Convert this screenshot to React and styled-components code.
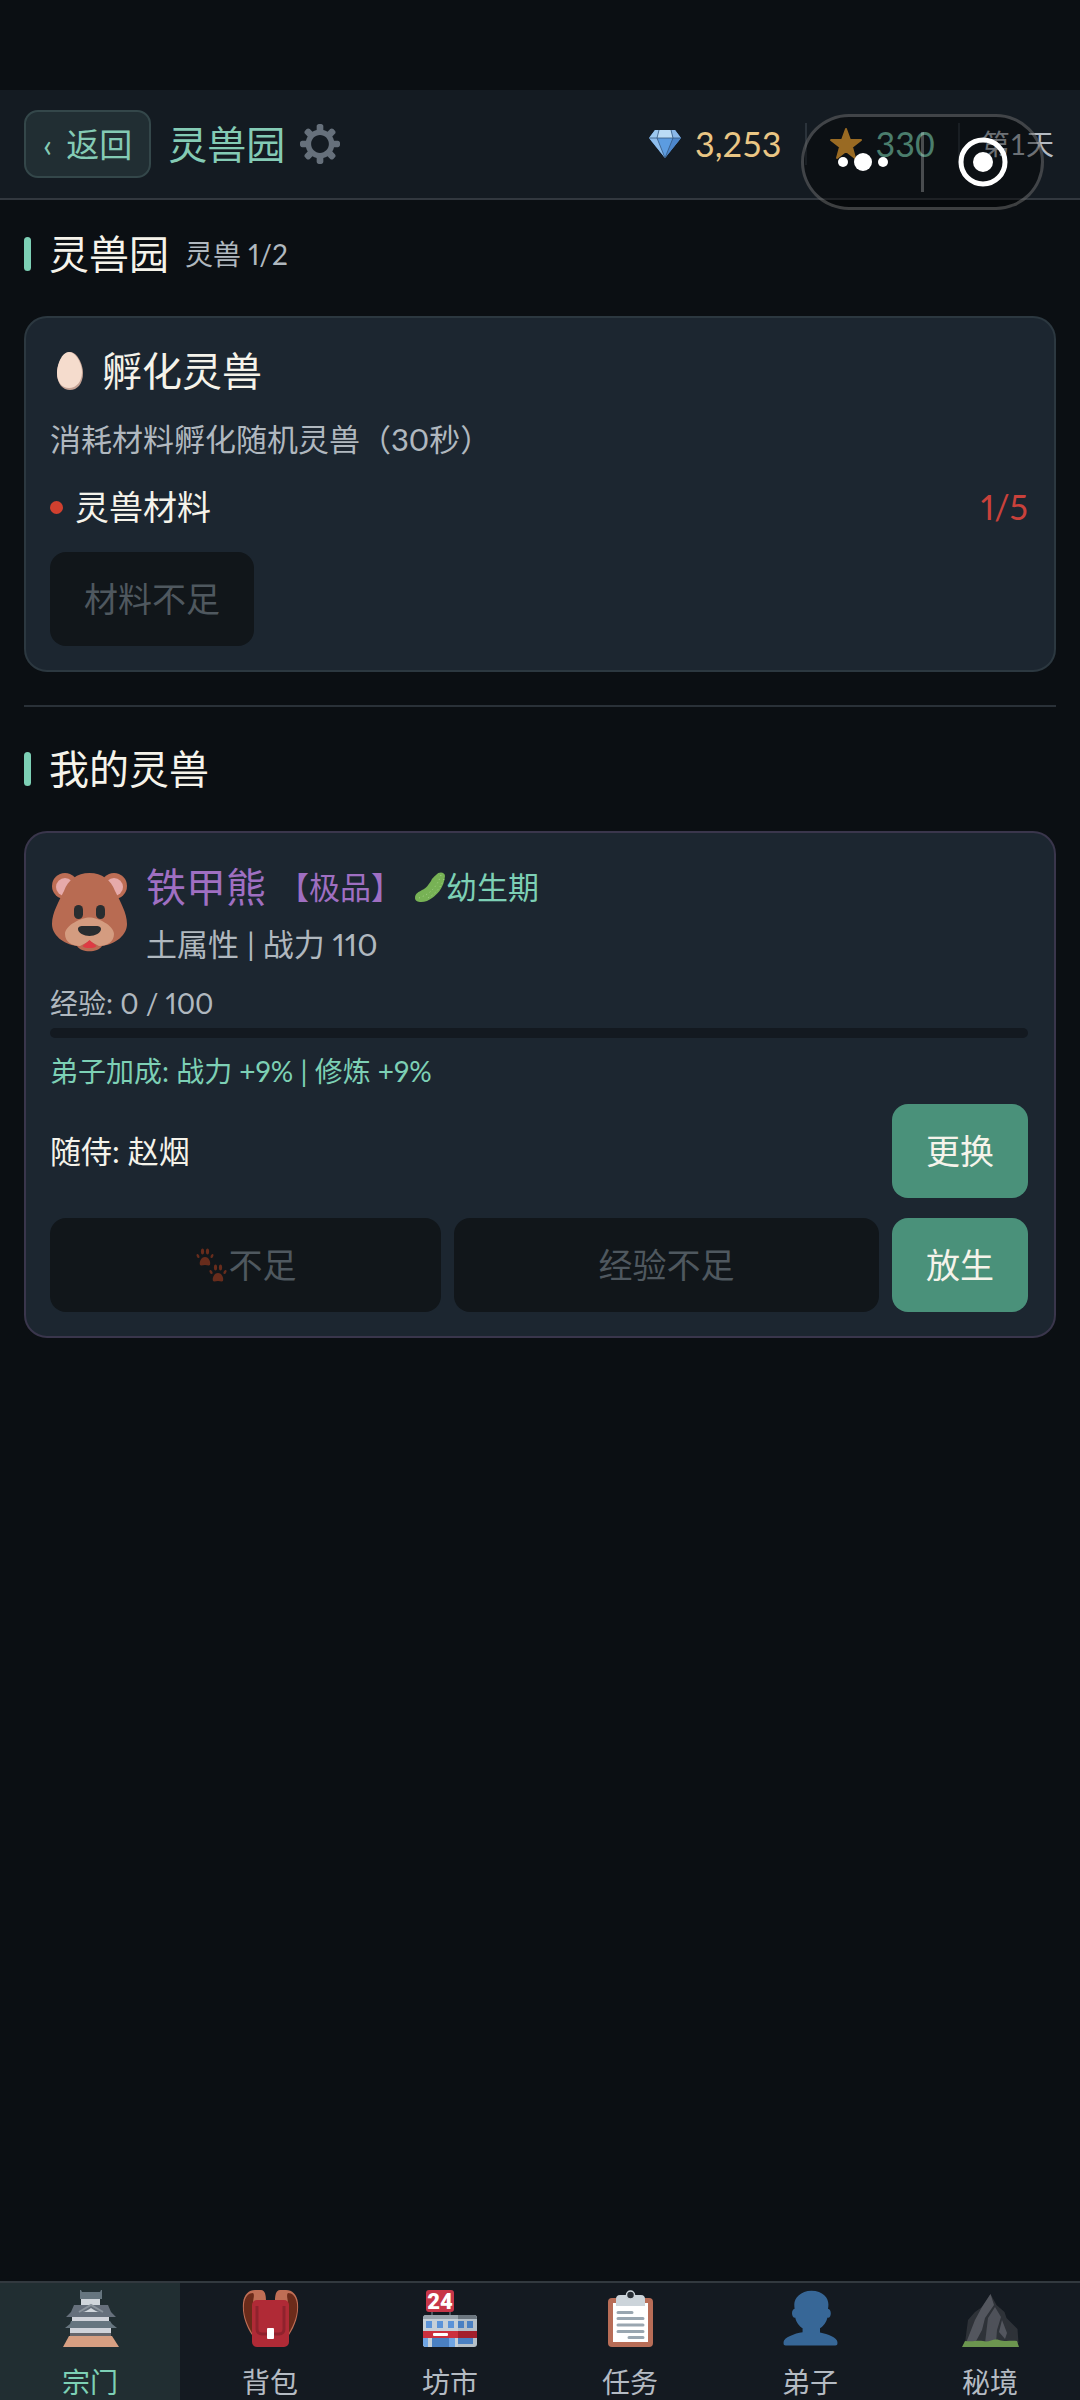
import React from 'react'
import styled, { createGlobalStyle } from 'styled-components'

const GlobalStyle = createGlobalStyle`
  * {
    box-sizing: border-box;
  }
  body {
    margin: 0;
    background-color: #0b0f13;
    color: #f5f3ea;
    font-family: Lato, 'Noto Sans CJK SC', sans-serif;
    font-variant-numeric: proportional-nums;
  }
  button {
    font-family: inherit;
    margin: 0;
    border: 0;
    cursor: pointer;
  }
  h1, h2, h3, p {
    margin: 0;
    font-weight: 400;
  }
  svg {
    display: block;
    flex-shrink: 0;
  }
`

const Page = styled.div`
  display: flex;
  flex-direction: column;
  min-height: 100vh;
  padding-top: 90px;
`

const Flex = styled.div`
  display: flex;
  align-items: ${props => props.align || 'center'};
  justify-content: ${props => props.justify || 'flex-start'};
  gap: ${props => props.gap || '0'};
  margin-top: ${props => props.mt || '0'};
`

/* header */

const Header = styled.header`
  display: flex;
  align-items: center;
  height: 110px;
  padding: 0 26px 0 24px;
  background-color: #141b22;
  border-bottom: 2px solid #32383f;
`

const BackButton = styled.button`
  display: flex;
  align-items: center;
  gap: 14px;
  height: 68px;
  padding: 0 17px;
  border: 2px solid #34474a;
  border-radius: 14px;
  background-color: #212e33;
  color: #84cbb5;
  font-size: 33px;
  line-height: 50px;
`

const PageTitle = styled.h1`
  margin-left: 17px;
  color: #84cbb5;
  font-size: 39px;
  line-height: 58px;
`

const IconButton = styled.button`
  margin-left: 15px;
  padding: 0;
  background: none;
`

const Stats = styled.div`
  display: flex;
  align-items: center;
  margin-left: auto;
  font-variant-numeric: tabular-nums;
`

const Stat = styled.div`
  display: flex;
  align-items: center;
  gap: 13px;
  color: ${props => props.color};
  font-size: ${props => (props.small ? '28px' : '34px')};
  line-height: 50px;

  & + & {
    margin-left: 23px;
    padding-left: 24px;
    background: linear-gradient(#2b333b, #2b333b) left center / 2px 42px no-repeat;
  }
`

const Capsule = styled.div`
  position: absolute;
  top: 114px;
  right: 36px;
  display: flex;
  align-items: center;
  width: 243px;
  height: 96px;
  border: 3px solid rgba(255, 255, 255, 0.22);
  border-radius: 48px;
  background-color: rgba(0, 0, 0, 0.4);
`

const CapsuleButton = styled.button`
  display: flex;
  flex: 1;
  align-items: center;
  justify-content: center;
  height: 60px;
  padding: 0;
  background: none;

  & + & {
    border-left: 3px solid rgba(255, 255, 255, 0.25);
  }
`

/* content */

const Main = styled.main`
  flex: 1;
  padding: 25px 24px 0;
`

const SectionHead = styled.div`
  display: flex;
  align-items: center;
  margin-bottom: 33px;

  &::before {
    content: '';
    width: 7px;
    height: 34px;
    margin-right: 18px;
    border-radius: 4px;
    background-color: #7dd0b5;
  }
`

const SectionTitle = styled.h2`
  font-size: 40px;
  line-height: 58px;
`

const Text = styled.span`
  color: ${props => props.color || '#b0b8bf'};
  font-size: ${props => props.size || '31px'};
  line-height: ${props => props.lh || '46px'};
`

const SectionCount = styled(Text)`
  margin-left: 16px;
`

const Divider = styled.hr`
  height: 2px;
  margin: 33px 0;
  border: 0;
  background-color: #2a3138;
`

const Card = styled.section`
  padding: 24px 26px 24px 24px;
  border: 2px solid ${props => props.border || '#2c3840'};
  border-radius: 23px;
  background-color: #1c2630;
`

const CardTitle = styled.h3`
  display: flex;
  align-items: center;
  gap: 12px;
  font-size: 40px;
  line-height: 58px;
`

const Desc = styled.p`
  margin-top: 16px;
  color: #b0b8bf;
  font-size: 31px;
  line-height: 46px;
`

const Dot = styled.i`
  width: 13px;
  height: 13px;
  margin-right: 12px;
  border-radius: 50%;
  background-color: #d0402f;
`

const Material = styled.div`
  display: flex;
  align-items: center;
  margin: 20px 0;
  font-size: 34px;
  line-height: 50px;
`

const Amount = styled.span`
  margin-left: auto;
  color: #c9413b;
`

const Button = styled.button`
  display: flex;
  flex-grow: ${props => (props.$grow ? 1 : 0)};
  align-items: center;
  justify-content: center;
  height: 94px;
  padding: 0 34px;
  border-radius: 16px;
  background-color: #4a917a;
  color: #f5f3ea;
  font-size: 34px;
  line-height: 50px;

  &:disabled {
    background-color: #11161a;
    color: #4f585f;
    cursor: default;
  }
`

const PetName = styled.h3`
  color: #9f6fc2;
  font-size: 40px;
  line-height: 60px;
`

const Stage = styled.span`
  display: flex;
  align-items: center;
  color: #7dd0b5;
  font-size: 31px;
  line-height: 46px;
`

const ExpLabel = styled.label`
  display: block;
  margin-top: 15px;
  color: #b0b8bf;
  font-size: 28px;
  line-height: 42px;
`

const ExpBar = styled.progress`
  display: block;
  width: 100%;
  height: 10px;
  margin: 4px 0 12px;
  border: 0;
  border-radius: 5px;
  appearance: none;
  overflow: hidden;

  &::-webkit-progress-bar {
    background-color: #131920;
  }
  &::-webkit-progress-value {
    background-color: #7dd0b5;
  }
`

const Bonus = styled.p`
  color: #7dd0b5;
  font-size: 28px;
  line-height: 42px;
`

/* bottom tabs */

const Nav = styled.nav`
  display: grid;
  grid-template-columns: repeat(6, 1fr);
  border-top: 2px solid #32393f;
  background-color: #141a21;
`

const NavLink = styled.a`
  display: flex;
  flex-direction: column;
  align-items: center;
  gap: 18px;
  padding-top: 7px;
  background-color: ${props => (props.$active ? '#212e32' : 'transparent')};
  color: ${props => (props.$active ? '#7dd0b5' : '#b4bbc3')};
  font-size: 28px;
  line-height: 35px;
  text-decoration: none;
`

/* icons */

const Gear = () => (
  <svg width="40" height="40" viewBox="0 0 36 36" fill="#66707b">
    <path d="M34 15h-3.362c-.324-1.369-.864-2.651-1.582-3.814l2.379-2.379c.781-.781.781-2.048 0-2.829l-1.414-1.414c-.781-.781-2.047-.781-2.828 0l-2.379 2.379C23.65 6.225 22.369 5.686 21 5.362V2c0-1.104-.896-2-2-2h-2c-1.104 0-2 .896-2 2v3.362c-1.369.324-2.651.864-3.814 1.582L8.808 4.565c-.781-.781-2.048-.781-2.828 0L4.565 5.979c-.781.781-.781 2.048-.001 2.829l2.379 2.379C6.225 12.35 5.686 13.632 5.362 15H2c-1.104 0-2 .896-2 2v2c0 1.104.896 2 2 2h3.362c.324 1.368.864 2.65 1.582 3.813l-2.379 2.379c-.78.78-.78 2.048.001 2.829l1.414 1.414c.78.78 2.047.78 2.828 0l2.379-2.379c1.163.719 2.445 1.258 3.814 1.582V34c0 1.104.896 2 2 2h2c1.104 0 2-.896 2-2v-3.362c1.368-.324 2.65-.864 3.813-1.582l2.379 2.379c.781.781 2.047.781 2.828 0l1.414-1.414c.781-.781.781-2.048 0-2.829l-2.379-2.379c.719-1.163 1.258-2.445 1.582-3.814H34c1.104 0 2-.896 2-2v-2C36 15.896 35.104 15 34 15zM18 26c-4.418 0-8-3.582-8-8s3.582-8 8-8 8 3.582 8 8-3.582 8-8 8z" />
  </svg>
)

const Gem = () => (
  <svg width="34" height="30" viewBox="0 0 34 30">
    <path d="M7 1h20l6 8-16 20L1 9z" fill="#5c9ce0" />
    <path d="M7 1h4l-1 8H1z" fill="#9cc8ef" />
    <path d="M11 1h12l2 8H9z" fill="#bbdcf6" />
    <path d="M23 1h4l6 8h-8z" fill="#8ab8e8" />
    <path d="M1 9h8l8 20z" fill="#8ebdec" />
    <path d="M25 9h8L17 29z" fill="#4d87cc" />
    <path d="M1 9h32M11 1L9 9l8 20 8-20-2-8" fill="none" stroke="#35587f" strokeWidth="0.8" />
  </svg>
)

const Star = () => (
  <svg width="34" height="34" viewBox="0 0 34 34">
    <path
      d="M17 2l4 11h11l-9 7 3 11-9-7-9 7 3-11-9-7h11z"
      fill="#ffb13b"
      stroke="#ffb13b"
      strokeWidth="2"
      strokeLinejoin="round"
    />
  </svg>
)

const Dots = () => (
  <svg width="52" height="20" viewBox="0 0 52 20" fill="#fff">
    <circle cx="6" cy="10" r="5" />
    <circle cx="26" cy="10" r="9" />
    <circle cx="46" cy="10" r="5" />
  </svg>
)

const Target = () => (
  <svg width="50" height="50" viewBox="0 0 50 50">
    <circle cx="25" cy="25" r="22" fill="none" stroke="#fff" strokeWidth="5" />
    <circle cx="25" cy="25" r="10" fill="#fff" />
  </svg>
)

const Egg = () => (
  <svg width="40" height="40" viewBox="0 0 40 40">
    <path d="M20 1c7 0 13 12 13 21 0 11-6 17-13 17S7 33 7 22C7 13 13 1 20 1z" fill="#c4a294" />
    <path d="M19 1c7 0 13 12 13 20 0 10-6 16-13 16S7 31 7 22C7 13 12 1 19 1z" fill="#f5dccd" />
  </svg>
)

const Bear = () => (
  <svg width="80" height="82" viewBox="0 0 80 82">
    <g fill="#bd6d54">
      <circle cx="15" cy="15" r="13" />
      <circle cx="64" cy="15" r="13" />
    </g>
    <g fill="#e6aaaa">
      <circle cx="15" cy="16" r="9" />
      <circle cx="64" cy="16" r="9" />
    </g>
    <path
      d="M39.500 2C27 2 18 9 14 20 9 30 2 42 2 53c0 11 11 20 25 22 4 7 21 7 25 0 14-2 25-11 25-22 0-11-7-23-12-33C61 9 52 2 39.500 2z"
      fill="#b86b52"
    />
    <path
      d="M39.500 46.500C32 46.500 15 54 15 63c0 8 7 12 15 12l9.500-5 9.500 5c8 0 15-4 15-12 0-9-17-16.500-24.500-16.500z"
      fill="#d49c80"
    />
    <path d="M39.500 69c2 2 5 4 7 6-2 2-4 2-7 2s-5 0-7-2c2-2 5-4 7-6z" fill="#dd3b44" />
    <path d="M28 58c0-4 6-3 11.500-3S51 54 51 58s-6 7-11.500 7S28 62 28 58z" fill="#292d30" />
    <rect x="24" y="34" width="9" height="14" rx="4.500" fill="#292d30" />
    <rect x="46" y="34" width="9" height="14" rx="4.500" fill="#292d30" />
  </svg>
)

const Cucumber = () => (
  <svg width="32" height="32" viewBox="0 0 32 32">
    <path
      d="M22 4c3-4 9-3 9 1-1 12-8 20-18 25-6 2-12 1-12-3 0-5 4-6 7-8 5-2 6-5 9-9 1-3 3-4 5-6z"
      fill="#77b255"
    />
    <path
      d="M27 4c-4 12-11 19-22 23M30 8c-4 10-10 16-18 20"
      fill="none"
      stroke="#a6d388"
      strokeWidth="1"
      strokeDasharray="1 3"
    />
  </svg>
)

const Paw = () => (
  <g>
    <path d="M9 9c4 0 6 5 5 8-1 1-3 0-5 0s-4 1-5 0c-1-3 1-8 5-8z" />
    <ellipse cx="2" cy="8" rx="1.300" ry="2.200" transform="rotate(-25 2 8)" />
    <ellipse cx="6.500" cy="3.500" rx="1.600" ry="3" />
    <ellipse cx="11.500" cy="3.500" rx="1.600" ry="3" />
    <ellipse cx="16" cy="8" rx="1.300" ry="2.200" transform="rotate(25 16 8)" />
  </g>
)

const Paws = () => (
  <svg width="34" height="34" viewBox="0 0 34 34" fill="#672c1c">
    <g transform="translate(1 0)">
      <Paw />
    </g>
    <g transform="translate(14 16)">
      <Paw />
    </g>
  </svg>
)

const Castle = () => (
  <svg width="57" height="57" viewBox="0 0 57 57">
    <path d="M18 0h1l1 2h18l1-2h1v9H18z" fill="#66757f" />
    <path d="M19 9h19v6h4v5H16v-5h3z" fill="#d0d6dc" />
    <path d="M12 15h34l3 7 5 5H4l5-5z" fill="#66707c" />
    <path d="M17 22l12-7 12 7" fill="none" stroke="#8b949d" strokeWidth="2" />
    <path d="M20 22c3 0 6-2 9-4 3 2 6 4 9 4z" fill="#d0d6dc" />
    <path d="M10 27h37v5H10zM8 38h41v6H8z" fill="#d0d3da" />
    <path d="M9 31h39l2 3 5 4H3l5-4z" fill="#66757f" />
    <path d="M8 43h41v3H8z" fill="#66666c" />
    <path d="M7 46h43l7 11H1z" fill="#d79f82" />
  </svg>
)

const Backpack = () => (
  <svg width="57" height="57" viewBox="0 0 57 57">
    <path d="M10 45C4 36 0 25 1 13 2 4 7 0 13 0h6c4 0 5 5 5 11h-8c-5 0-6 7-6 14z" fill="#bf6e55" />
    <path d="M47 45c6-9 10-20 9-32-1-9-6-13-12-13h-6c-4 0-5 5-5 11h8c5 0 6 7 6 14z" fill="#bf6e55" />
    <path d="M10 43C5 34 1 25 2 14c1-8 5-11 9-11 2 2 0 6 0 11z" fill="#6b2b1a" />
    <path d="M47 43c5-9 9-18 8-29-1-8-5-11-9-11-2 2 0 6 0 11z" fill="#6b2b1a" />
    <rect x="10" y="10" width="37" height="47" rx="5" fill="#b02a36" />
    <path d="M15 16v23c0 3 2 5 5 5h17c3 0 5-2 5-5V16" fill="none" stroke="#8f222d" strokeWidth="3" />
    <rect x="25" y="38" width="7" height="11" rx="1" fill="#fff" />
  </svg>
)

const Store = () => (
  <svg width="57" height="57" viewBox="0 0 57 57">
    <path d="M9 21h2v5H9zM27 21h2v5h-2z" fill="#4c555d" />
    <rect x="4" y="0" width="28" height="22" rx="3" fill="#c73649" />
    <text x="18" y="19" fill="#fff" fontFamily="Roboto, sans-serif" fontSize="22" fontWeight="900" textAnchor="middle">
      24
    </text>
    <rect x="1" y="25" width="54" height="32" rx="3" fill="#b5c0c9" />
    <path d="M1 28h35v29H4c-2 0-3-1-3-3z" fill="#c6d0d8" />
    <path d="M4 25h32v4H1c0-2 1-4 3-4z" fill="#98a2ab" />
    <path d="M36 25h16c2 0 3 2 3 4H36z" fill="#6c767f" />
    <path d="M4 31h6v7H4zM15 31h6v7h-6zM26 31h6v7h-6z" fill="#5b93d8" />
    <path d="M36 31h6v7h-6zM45 31h6v7h-6z" fill="#4a80c2" />
    <path d="M1 41h35v7H1z" fill="#cc303e" />
    <path d="M36 41h19v7H36z" fill="#a3202d" />
    <path d="M1 48h5v9H4c-2 0-3-1-3-3zM10 48h23v9H10z" fill="#6fa5e4" />
    <path d="M10 48h17v9H10zM36 48h15v6H36z" fill="#4a80c2" />
    <rect x="11" y="43" width="15" height="3" rx="1" fill="#fff" />
  </svg>
)

const Clipboard = () => (
  <svg width="57" height="57" viewBox="0 0 57 57">
    <rect x="6" y="8" width="45" height="49" rx="4" fill="#b86d57" />
    <path d="M11 13h35v39H11z" fill="#fff" />
    <path d="M14 16V9c0-2 1-4 4-4h21c3 0 4 2 4 4v7z" fill="#ccd4da" />
    <circle cx="28.500" cy="5" r="4" fill="#292f35" stroke="#ccd4da" strokeWidth="1.500" />
    <path
      d="M16 22.500h14M16 28.500h25M16 35h25M16 41.500h25M27 47.500h14"
      stroke="#99a6b0"
      strokeWidth="3"
      strokeLinecap="round"
    />
  </svg>
)

const Person = () => (
  <svg width="57" height="57" viewBox="0 0 36 36" fill="#376797">
    <path d="M24 26.799v-2.566c2-1.348 4.080-3.779 4.703-6.896.186.103.206.17.413.17.991 0 1.709-1.287 1.709-2.873 0-1.562-.823-2.827-1.794-2.865.187-.674.293-1.577.293-2.735C29.324 5.168 26 .527 18.541.527c-6.629 0-10.777 4.641-10.777 8.507 0 1.123.069 2.043.188 2.755-.911.137-1.629 1.352-1.629 2.845 0 1.587.804 2.873 1.796 2.873.206 0 .025-.067.209-.17C8.952 20.453 11 22.885 13 24.232v2.414c-5 .645-12 3.437-12 6.230v1.061C1 35 2.076 35 3.137 35h29.725C33.924 35 35 35 35 33.938v-1.061c0-2.615-6-5.225-11-6.078z" />
  </svg>
)

const Mountain = () => (
  <svg width="57" height="57" viewBox="0 0 57 57">
    <path d="M28.500 4l6 11 8 7 2 6 11 11 1 14H3l3-23 7-8 7-5z" fill="#2e3238" />
    <path d="M28.500 4L32 15l-9 13-3 12-7 13H4l9-23 7-13z" fill="#53565e" />
    <path d="M33 17l6 10-4 13-1 13H23l3-25z" fill="#4e5159" />
    <path d="M40 30l5 13-2 6-6-7z" fill="#53565e" />
    <path d="M3 51c8 1 12-1 18 0 6 2 10-3 16-1 7 2 12 0 18 1l2 6H0z" fill="#6c964f" />
  </svg>
)

const tabs = [
  { label: '宗门', icon: Castle, active: true },
  { label: '背包', icon: Backpack },
  { label: '坊市', icon: Store },
  { label: '任务', icon: Clipboard },
  { label: '弟子', icon: Person },
  { label: '秘境', icon: Mountain },
]

const TopBar = () => (
  <Header>
    <BackButton type="button">
      <span>‹</span>
      <span>返回</span>
    </BackButton>
    <PageTitle>灵兽园</PageTitle>
    <IconButton type="button" aria-label="设置">
      <Gear />
    </IconButton>
    <Stats>
      <Stat color="#eac684">
        <Gem />
        3,253
      </Stat>
      <Stat color="#7dd0b5">
        <Star />
        330
      </Stat>
      <Stat color="#b4bbc3" small>
        第1天
      </Stat>
    </Stats>
    <Capsule>
      <CapsuleButton type="button" aria-label="更多">
        <Dots />
      </CapsuleButton>
      <CapsuleButton type="button" aria-label="关闭">
        <Target />
      </CapsuleButton>
    </Capsule>
  </Header>
)

const HatchCard = () => (
  <Card>
    <CardTitle>
      <Egg />
      孵化灵兽
    </CardTitle>
    <Desc>消耗材料孵化随机灵兽（30秒）</Desc>
    <Material>
      <Dot />
      灵兽材料
      <Amount>1/5</Amount>
    </Material>
    <Button type="button" disabled>
      材料不足
    </Button>
  </Card>
)

const PetCard = () => (
  <Card border="#3a364c">
    <Flex gap="16px">
      <Bear />
      <div>
        <Flex gap="12px">
          <PetName>铁甲熊</PetName>
          <Text color="#9f6fc2">【极品】</Text>
          <Stage>
            <Cucumber />
            幼生期
          </Stage>
        </Flex>
        <Flex mt="4px">
          <Text>土属性 | 战力 110</Text>
        </Flex>
      </div>
    </Flex>
    <ExpLabel htmlFor="exp">经验: 0 / 100</ExpLabel>
    <ExpBar id="exp" value="0" max="100" />
    <Bonus>弟子加成: 战力 +9% | 修炼 +9%</Bonus>
    <Flex justify="space-between" mt="12px">
      <Text color="#f5f3ea">随侍: 赵烟</Text>
      <Button type="button">更换</Button>
    </Flex>
    <Flex gap="13px" mt="20px">
      <Button type="button" disabled $grow>
        <Paws />
        不足
      </Button>
      <Button type="button" disabled $grow>
        经验不足
      </Button>
      <Button type="button">放生</Button>
    </Flex>
  </Card>
)

const App = () => (
  <Page>
    <GlobalStyle />
    <TopBar />
    <Main>
      <SectionHead>
        <SectionTitle>灵兽园</SectionTitle>
        <SectionCount size="28px" lh="42px">
          灵兽 1/2
        </SectionCount>
      </SectionHead>
      <HatchCard />
      <Divider />
      <SectionHead>
        <SectionTitle>我的灵兽</SectionTitle>
      </SectionHead>
      <PetCard />
    </Main>
    <Nav>
      {tabs.map(({ label, icon: Icon, active }) => (
        <NavLink key={label} href="#" $active={active}>
          <Icon />
          {label}
        </NavLink>
      ))}
    </Nav>
  </Page>
)

export default App
